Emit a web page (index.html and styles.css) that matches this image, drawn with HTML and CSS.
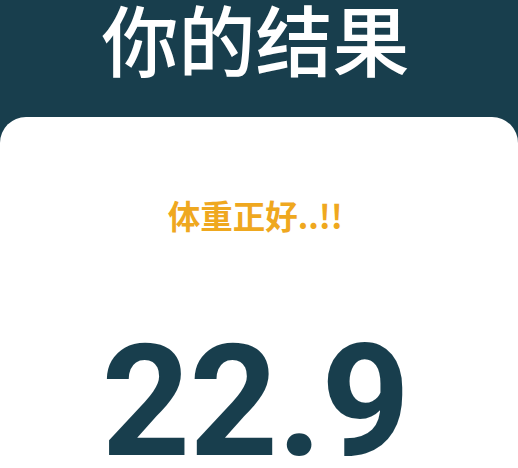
FILE: index.html
```html
<!DOCTYPE html>
<html lang="zh">
<head>
<meta charset="utf-8">
<link rel="stylesheet" href="styles.css">
</head>
<body>
<div class="page">
  <header class="header">
    <h1 class="title">你的结果</h1>
  </header>
  <main class="card">
    <p class="status">体重正好..!!</p>
    <p class="bmi">22.9</p>
  </main>
</div>
</body>
</html>
```
FILE: styles.css
```css
html, body {
  margin: 0;
  padding: 0;
  background: #183e4d;
  height: 100%;
  overflow: hidden;
}
.page {
  display: flex;
  flex-direction: column;
  height: 468px;
}
.header {
  height: 117px;
  flex-shrink: 0;
  display: flex;
  justify-content: center;
  padding-right: 7px;
}
.title {
  margin: 0;
  font-family: "Noto Sans CJK SC", sans-serif;
  font-weight: 500;
  font-size: 77px;
  line-height: 76px;
  color: #ffffff;
}
.card {
  flex: 1;
  min-height: 0;
  overflow: hidden;
  width: 517.5px;
  box-sizing: border-box;
  padding-right: 7px;
  background: #ffffff;
  border-radius: 26px 26px 0 0;
  display: flex;
  flex-direction: column;
  align-items: center;
}
.status {
  margin: 78px 0 0 0;
  font-family: "Noto Sans CJK SC", sans-serif;
  font-weight: 700;
  font-size: 32.5px;
  line-height: 40px;
  color: #efa81f;
  flex-shrink: 0;
}
.bmi {
  margin: 90px 0 0 0;
  font-family: Roboto, sans-serif;
  font-weight: 700;
  font-size: 155px;
  line-height: 155px;
  color: #183e4d;
  letter-spacing: -1px;
  flex-shrink: 0;
}
```
